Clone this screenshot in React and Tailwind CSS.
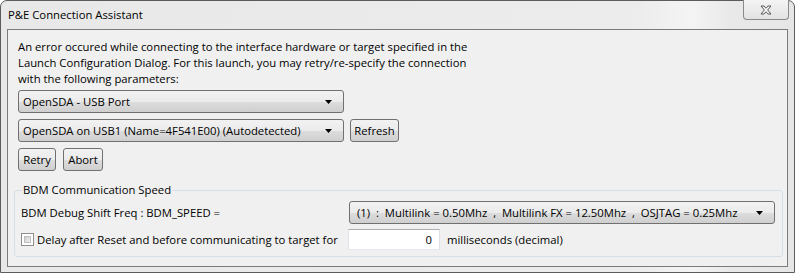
import React from "react";

function Arrow() {
  return (
    <svg width="7" height="4" viewBox="0 0 7 4" className="shrink-0">
      <path d="M0 0H7L3.5 4Z" fill="#000" />
    </svg>
  );
}

function Combo({ children, className = "" }) {
  return (
    <div
      className={
        "h-[23px] flex items-center justify-between rounded-[3px] border border-[#707070] bg-[linear-gradient(#f2f2f2_0%,#ebebeb_50%,#dddddd_51%,#cfcfcf_100%)] pl-[4px] pr-[11px] " +
        className
      }
    >
      <span className="whitespace-pre leading-none">{children}</span>
      <Arrow />
    </div>
  );
}

function Btn({ children, className = "" }) {
  return (
    <div
      className={
        "h-[23px] flex items-center justify-center rounded-[3px] border border-[#707070] bg-[linear-gradient(#f2f2f2_0%,#ebebeb_50%,#dddddd_51%,#cfcfcf_100%)] " +
        className
      }
    >
      <span className="leading-none">{children}</span>
    </div>
  );
}

export default function App() {
  return (
    <div className="w-[795px] h-[273px] bg-white font-['Open_Sans',sans-serif] text-[11.3px] text-black">
      <div className="w-[795px] h-[273px] flex flex-col rounded-t-[7px] border border-[#5c5c5c] bg-[linear-gradient(90deg,#e8e8e8_0%,#ececec_80%,#f4f4f4_87%,#e9e9e9_92%,#e6e6e6_100%)] px-[6px] pb-[5px]">
        <div className="h-[28px] shrink-0 flex items-start justify-between">
          <span className="pl-[1px] pt-[6px] leading-[16px]">P&amp;E Connection Assistant</span>
          <div className="mt-[-1px] mr-[-1px] w-[46px] h-[20px] flex items-center justify-center rounded-b-[4px] border border-[#8a8a8a] border-t-0 bg-[linear-gradient(#f4f4f4,#e2e2e2)]">
            <svg width="12" height="10" viewBox="0 0 12 10">
              <path
                d="M1 1H4L6 3.3L8 1H11L7.6 5L11 9H8L6 6.7L4 9H1L4.4 5Z"
                fill="#fff"
                stroke="#555"
                strokeWidth="1"
                strokeLinejoin="round"
              />
            </svg>
          </div>
        </div>
        <div className="flex-1 flex flex-col border border-[#7b7b7b] bg-[#f0f0f0] pl-[10px] pt-[9px]">
          <p className="leading-[16px] w-[470px]">
            An error occured while connecting to the interface hardware or target specified in the Launch Configuration Dialog. For this launch, you may retry/re-specify the connection with the following parameters:
          </p>
          <Combo className="mt-[3px] w-[326px]">OpenSDA - USB Port</Combo>
          <div className="mt-[6px] flex gap-[6px]">
            <Combo className="w-[326px]">OpenSDA on USB1 (Name=4F541E00) (Autodetected)</Combo>
            <Btn className="w-[49px]">Refresh</Btn>
          </div>
          <div className="mt-[6px] flex gap-[7px]">
            <Btn className="w-[38px]">Retry</Btn>
            <Btn className="w-[40px]">Abort</Btn>
          </div>
          <fieldset className="mt-[11px] ml-[-4px] w-[769px] h-[75px] rounded-[3px] border border-[#d5dfe5] px-[6px] pt-[3px]">
            <legend className="px-[1px] ml-[1px] leading-[16px]">BDM Communication Speed</legend>
            <div className="flex items-center justify-between">
              <span className="leading-none">BDM Debug Shift Freq : BDM_SPEED =</span>
              <Combo className="w-[426px] mr-[1px] pl-[7px] pr-[11px]">{"(1)  :  Multilink = 0.50Mhz  ,  Multilink FX = 12.50Mhz  ,  OSJTAG = 0.25Mhz"}</Combo>
            </div>
            <div className="mt-[5px] flex items-center">
              <div className="w-[13px] h-[13px] border border-[#8f8f8f] bg-white p-[2px]">
                <div className="w-full h-full border border-[#c0c0c0] bg-[linear-gradient(135deg,#cbcbcb,#f2f2f2)]" />
              </div>
              <span className="ml-[3px] w-[311px] leading-none">Delay after Reset and before communicating to target for</span>
              <div className="w-[92px] h-[21px] flex items-center justify-end border border-[#abadb3] border-l-[#e2e3ea] border-b-[#e3e9ef] border-r-[#dbdfe6] bg-white pr-[7px]">
                <span className="leading-none">0</span>
              </div>
              <span className="ml-[7px] leading-none">milliseconds (decimal)</span>
            </div>
          </fieldset>
        </div>
      </div>
    </div>
  );
}
